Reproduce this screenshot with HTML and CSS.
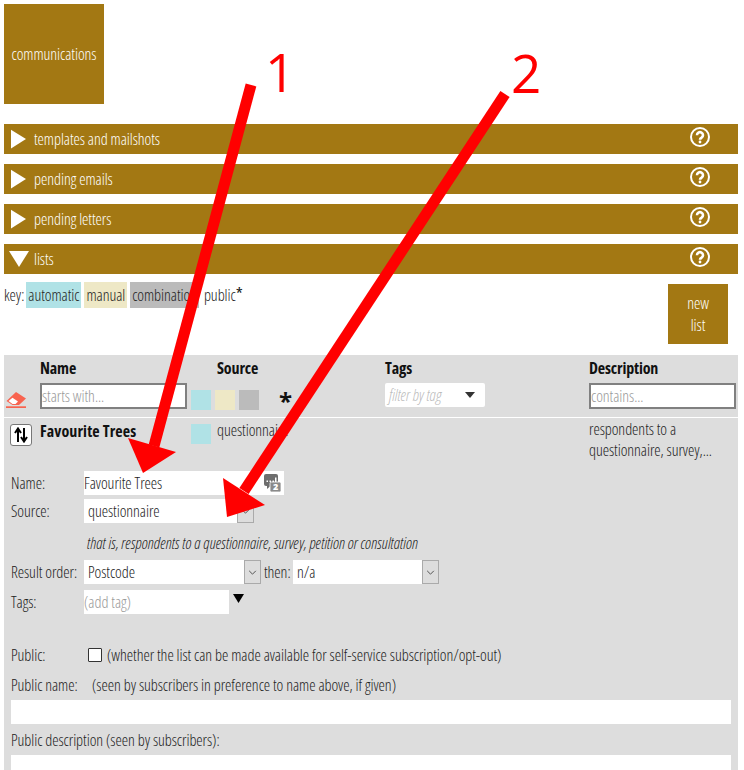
FILE: index.html
```html
<!DOCTYPE html>
<html lang="en">
<head>
<meta charset="utf-8">
<title>communications</title>
<link rel="stylesheet" href="styles.css">
</head>
<body>
<main class="page">
  <a class="tile">communications</a>
  <section class="bars">
    <div class="bar"><svg class="tri" viewBox="0 0 16 20"><path d="M0 0L16 10L0 20Z"/></svg><span class="bar-label">templates and mailshots</span><svg class="help" viewBox="0 0 20 20"><circle cx="10" cy="10" r="9"/><path class="q" d="M7 8.2a3 3 0 1 1 4.6 2.5c-1 .7-1.6 1-1.6 2"/><circle class="dot" cx="10" cy="15" r="1.4"/></svg></div>
    <div class="bar"><svg class="tri" viewBox="0 0 16 20"><path d="M0 0L16 10L0 20Z"/></svg><span class="bar-label">pending emails</span><svg class="help" viewBox="0 0 20 20"><circle cx="10" cy="10" r="9"/><path class="q" d="M7 8.2a3 3 0 1 1 4.6 2.5c-1 .7-1.6 1-1.6 2"/><circle class="dot" cx="10" cy="15" r="1.4"/></svg></div>
    <div class="bar"><svg class="tri" viewBox="0 0 16 20"><path d="M0 0L16 10L0 20Z"/></svg><span class="bar-label">pending letters</span><svg class="help" viewBox="0 0 20 20"><circle cx="10" cy="10" r="9"/><path class="q" d="M7 8.2a3 3 0 1 1 4.6 2.5c-1 .7-1.6 1-1.6 2"/><circle class="dot" cx="10" cy="15" r="1.4"/></svg></div>
    <div class="bar"><svg class="tri-down" viewBox="0 0 20 16"><path d="M0 0H20L10 16Z"/></svg><span class="bar-label">lists</span><svg class="help" viewBox="0 0 20 20"><circle cx="10" cy="10" r="9"/><path class="q" d="M7 8.2a3 3 0 1 1 4.6 2.5c-1 .7-1.6 1-1.6 2"/><circle class="dot" cx="10" cy="15" r="1.4"/></svg></div>
  </section>
  <section class="key-row">
    <div class="key">
      <span class="key-label">key:</span>
      <span class="chip auto">automatic</span>
      <span class="chip manual">manual</span>
      <span class="chip combo">combination</span>
      <span class="key-public">public<span class="star">*</span></span>
    </div>
    <a class="new-list">new<br>list</a>
  </section>
  <section class="panel">
    <div class="cols head">
      <svg class="eraser" viewBox="0 0 20 16"><path class="eraser-body" d="M10 0L20 6.5L13 13H6.5L0.5 9Z"/><path class="eraser-tip" d="M2.5 9L6.5 5.8L12 9.5L9.5 12H6.5Z"/><rect class="eraser-body" x="0" y="14.3" width="20" height="1.7"/></svg>
      <div class="col-name"><h3>Name</h3><input class="filter" placeholder="starts with..."></div>
      <div class="col-source">
        <h3 class="source-title">Source</h3>
        <div class="swatches"><i class="sw auto"></i><i class="sw manual"></i><i class="sw combo"></i><b class="big-star">*</b></div>
      </div>
      <div class="col-tags"><h3>Tags</h3><div class="tag-filter"><em>filter by tag</em><svg class="caret" viewBox="0 0 10 6"><path d="M0 0H10L5 6Z"/></svg></div></div>
      <div class="col-desc"><h3>Description</h3><input class="filter" placeholder="contains..."></div>
    </div>
    <div class="cols item">
      <span class="sort"><svg viewBox="0 0 14 16"><path d="M4 15V3M1 6L4 1.5L7 6M10 1V13M7 10L10 14.5L13 10"/></svg></span>
      <strong class="col-name">Favourite Trees</strong>
      <div class="col-source item-source"><i class="sw auto"></i><span>questionnaire</span></div>
      <div class="col-tags"></div>
      <div class="col-desc item-desc">respondents to a questionnaire, survey,...</div>
    </div>
    <form class="form">
      <div class="line name-line">
        <label>Name:</label>
        <div class="field-wrap"><input class="field" value="Favourite Trees">
          <svg class="count" viewBox="0 0 17 18"><rect x="0" y="0" width="14" height="12" rx="2"/><path d="M3 12V15L6.5 12Z"/><rect class="count-b" x="6" y="8" width="11" height="10" rx="1.5"/><path class="white" d="M2.5 6.5h1.5V8H2.5zM5.5 6.5H7V8H5.5zM8.500 6.500H10V8H8.500zM11 3.500h1.500V8H11z"/><text class="count-n" x="11.500" y="16">2</text></svg>
        </div>
      </div>
      <div class="line source-line">
        <label>Source:</label>
        <select class="sel sel-source"><option>questionnaire</option></select><span class="chev"><svg viewBox="0 0 10 6"><path d="M1 1L5 5L9 1"/></svg></span>
      </div>
      <p class="hint">that is, respondents to a questionnaire, survey, petition or consultation</p>
      <div class="line order-line">
        <label>Result order:</label>
        <select class="sel sel-order"><option>Postcode</option></select><span class="chev"><svg viewBox="0 0 10 6"><path d="M1 1L5 5L9 1"/></svg></span>
        <span class="then">then:</span>
        <select class="sel sel-then"><option>n/a</option></select><span class="chev"><svg viewBox="0 0 10 6"><path d="M1 1L5 5L9 1"/></svg></span>
      </div>
      <div class="line tags-line">
        <label>Tags:</label>
        <input class="field tag-input" placeholder="(add tag)">
        <svg class="tag-caret" viewBox="0 0 11 9"><path d="M0 0H11L5.500 9Z"/></svg>
      </div>
      <div class="line public-line">
        <label>Public:</label>
        <span class="check"></span>
        <span>(whether the list can be made available for self-service subscription/opt-out)</span>
      </div>
      <div class="line pubname-line"><span class="pubname-label">Public name:</span><span>(seen by subscribers in preference to name above, if given)</span></div>
      <input class="wide">
      <div class="line pubdesc-line">Public description (seen by subscribers):</div>
      <input class="wide">
    </form>
  </section>
  <svg class="arrows" viewBox="0 0 744 770" aria-hidden="true">
    <path d="M251 85L154 446"/>
    <polygon points="128,438 176,452 143,473"/>
    <path d="M505 94L244 491"/>
    <polygon points="223,478 265,505 227,517"/>
  </svg>
  <span class="num num-1">1</span>
  <span class="num num-2">2</span>
</main>
</body>
</html>
```
FILE: styles.css
```css
* { box-sizing: border-box; }
html, body { margin: 0; height: 770px; overflow: hidden; background: #fff; }
body, input, select {
  font-family: "Open Sans", "Liberation Sans", sans-serif;
  font-stretch: 75%;
  font-weight: 300;
  font-size: 16px;
  letter-spacing: -0.05px;
  color: #222;
}
.page { position: relative; padding: 4px 6px 0 4px; height: 770px; }
.tile {
  display: flex; align-items: center; justify-content: center;
  width: 100px; height: 100px; background: #a37813; color: #fff;
}
.bars { margin-top: 20px; display: flex; flex-direction: column; gap: 10px; }
.bar {
  height: 30px; background: #a37813; color: #fff;
  display: flex; align-items: center; padding: 0 28px 0 7px;
}
.tri { width: 15px; height: 20px; fill: #fff; margin-right: 8px; }
.tri-down { width: 20px; height: 16px; fill: #fff; margin: 0 5px 0 -2px; }
.bar-label { flex: 1; }
.help { width: 20px; height: 20px; margin-top: -5px; fill: none; stroke: #fff; stroke-width: 2; }
.help .q { stroke-width: 2.6; }
.help .dot { fill: #fff; stroke: none; }
.key-row { display: flex; justify-content: space-between; height: 81px; padding: 8px 10px 0 0; }
.key { display: flex; height: 26px; align-items: center; }
.key-label { margin-right: 2px; }
.chip { height: 26px; line-height: 26px; padding: 0 2px; margin-right: 3px; }
.auto { background: #b0e2e6; }
.manual { background: #eee8c6; }
.combo { background: #bbb; }
.key-public { margin-left: 2px; }
.star { font-weight: 400; font-size: 18px; line-height: 16px; }
.new-list {
  width: 60px; height: 60px; margin-top: 2px; background: #a37813; color: #fff;
  text-align: center; line-height: 21.5px; padding-top: 9px;
}
.panel { background: #ddd; height: 415px; }
h3 { margin: 0; font-size: 16px; font-weight: 700; color: #111; line-height: 26px; letter-spacing: -0.15px; }
.cols { display: grid; grid-template-columns: 36px 151px 194px 204px 1fr; }
.head { height: 63px; border-bottom: 1px solid #fff; }
.eraser { width: 20px; height: 16px; margin: 37px 0 0 2px; }
.eraser-body { fill: #f8634f; }
.eraser-tip { fill: #fff; }
.filter {
  display: block; width: 147px; height: 26px; border: 2px solid #808080;
  background: #fff; padding: 0; outline: none; margin-top: 2px;
}
.filter::placeholder, .tag-input::placeholder { color: #999; opacity: 1; }
.source-title { padding-left: 26px; }
.swatches { display: flex; gap: 4px; margin-top: 9px; align-items: flex-start; }
.sw { display: block; width: 20px; height: 20px; }
.big-star { font-size: 24px; font-weight: 700; line-height: 22px; margin-left: 16px; font-stretch: 100%; color: #111; }
.tag-filter {
  width: 100px; height: 24px; background: #fff; border-radius: 2px; margin-top: 2px;
  display: flex; align-items: center; justify-content: space-between; padding: 0 10px 0 4px;
}
.tag-filter em { color: #bbb; }
.caret { width: 10px; height: 6px; fill: #333; }
.item { height: 53px; padding-top: 1px; }
.sort {
  display: flex; align-items: center; justify-content: center;
  width: 22px; height: 22px; margin: 5px 0 0 6px; border: 1px solid #777; border-radius: 3px; background: #fff;
}
.sort svg { width: 14px; height: 16px; fill: none; stroke: #000; stroke-width: 2; }
.item strong { font-weight: 700; color: #111; line-height: 24px; letter-spacing: 0.1px; }
.item-source { display: flex; gap: 6px; align-items: flex-start; }
.item-source .sw { margin-top: 5px; }
.item-source span { line-height: 22px; }
.item-desc { line-height: 21px; }
.form { padding: 0 7px; }
.line { display: flex; align-items: center; }
.line label { width: 73px; flex: none; }
.field-wrap { position: relative; width: 200px; height: 24px; background: #fff; }
.field { border: 0; background: #fff; height: 24px; padding: 0; outline: none; }
.field-wrap .field { width: 175px; }
.count { position: absolute; right: 3px; top: 3px; width: 17px; height: 18px; fill: #6e6e6e; overflow: visible; }
.count .count-b { fill: #8a8a8a; stroke: #fff; stroke-width: .8; }
.count .white { fill: #fff; }
.count-n { font-size: 9px; font-weight: 800; fill: #fff; text-anchor: middle; font-stretch: 100%; }
.name-line { height: 24px; }
.source-line { height: 24px; margin-top: 4px; }
.sel {
  appearance: none; -webkit-appearance: none; border: 0; border-radius: 0; background: #fff;
  height: 24px; padding: 0 0 0 4px; outline: none;
}
.sel-source { width: 153px; }
.sel-order { width: 160px; }
.sel-then { width: 129px; }
.chev {
  display: flex; align-items: center; justify-content: center;
  width: 17px; height: 24px; border: 1px solid #aaa; background: #ddd;
}
.chev svg { width: 9px; height: 5px; fill: none; stroke: #555; stroke-width: 1.2; }
.hint { margin: 0; height: 37px; line-height: 40px; padding-left: 76px; font-style: italic; letter-spacing: 0; }
.then { margin: 0 4px 0 3px; width: 25px; }
.tags-line { margin-top: 6px; height: 24px; }
.tag-input { width: 145px; }
.tag-caret { width: 11px; height: 9px; margin: -8px 0 0 4px; fill: #000; }
.public-line { margin-top: 30px; height: 22px; }
.check { width: 14px; height: 14px; border: 1px solid #333; background: #fff; border-radius: 1px; margin: 0 5px 0 4px; }
.pubname-line { height: 22px; margin-top: 8px; }
.pubname-label { width: 81px; }
.wide { display: block; width: 720px; height: 24px; border: 0; background: #fff; margin-top: 4px; outline: none; }
.pubdesc-line { height: 22px; margin-top: 5px; }
.arrows { position: absolute; left: 0; top: 0; width: 744px; height: 770px; pointer-events: none; }
.arrows path { stroke: #f00; stroke-width: 11; fill: none; }
.arrows polygon { fill: #f00; }
.num { position: absolute; color: #f00; font-size: 53px; font-stretch: 100%; font-weight: 400; line-height: 60px; }
.num-1 { left: 265px; top: 42px; }
.num-2 { left: 511px; top: 43px; }
```
